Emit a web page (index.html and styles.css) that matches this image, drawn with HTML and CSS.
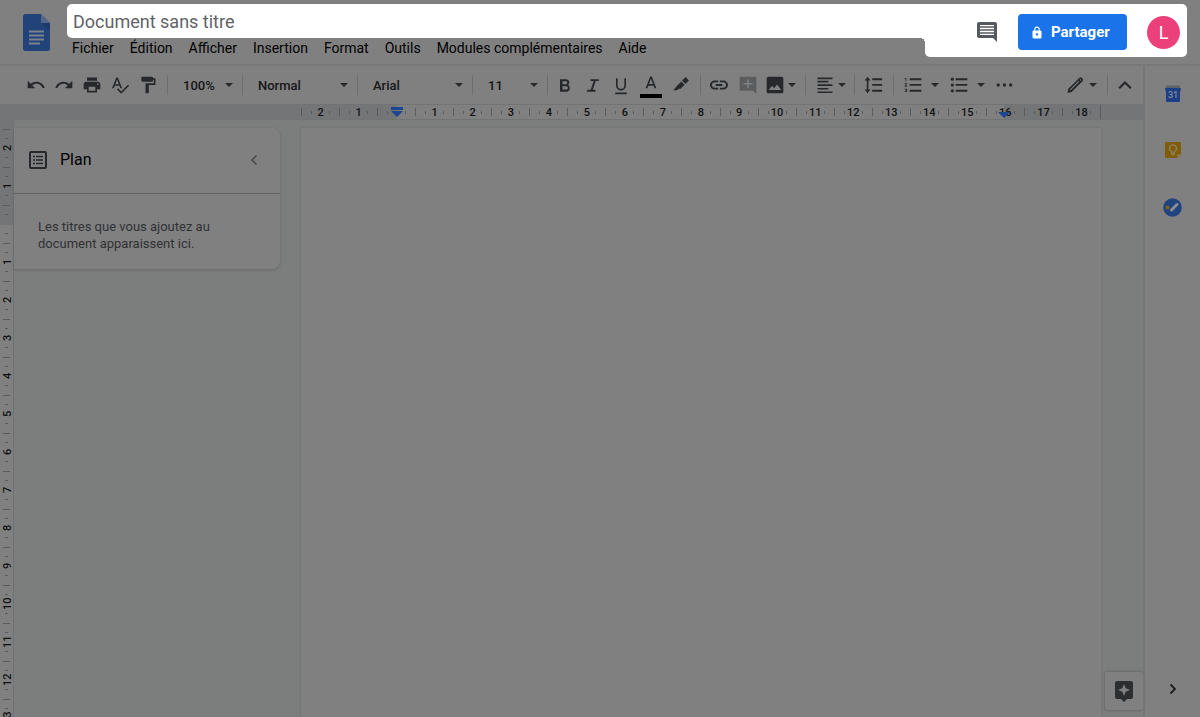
FILE: index.html
```html
<!DOCTYPE html>
<html lang="fr">
<head>
<meta charset="utf-8">
<title>Document sans titre</title>
<link rel="stylesheet" href="styles.css">
</head>
<body>
<header class="header">
  <a class="logo" href="#" aria-label="Accueil Docs">
    <svg width="27" height="37" viewBox="0 0 27 37"><path d="M2.500 0H18l9 9v25.500a2.500 2.500 0 0 1-2.500 2.500h-22A2.500 2.500 0 0 1 0 34.500v-32A2.500 2.500 0 0 1 2.500 0z" fill="#21437a"/><path d="M18 0l9 9h-9z" fill="#52668a"/><path d="M18 9h9v8z" fill="#1d3a6b"/><path d="M6 17.500h15M6 21.500h15M6 25.500h15M6 29.500h11" stroke="#7c828c" stroke-width="2"/></svg>
  </a>
  <div class="spotlight">
    <div class="heading">
      <input class="title" type="text" value="Document sans titre" aria-label="Titre du document">
      <nav class="menu">
        <button>Fichier</button><button>Édition</button><button>Afficher</button><button>Insertion</button><button>Format</button><button>Outils</button><button>Modules complémentaires</button><button>Aide</button>
      </nav>
    </div>
    <div class="actions">
      <button class="comments" aria-label="Commentaires"><svg width="24" height="24" viewBox="0 0 24 24"><path fill="#555a60" d="M22 4c0-1.100-.9-2-2-2H4c-1.100 0-2 .9-2 2v12c0 1.100.9 2 2 2h14l4 4zM19 15H5V5h14z"/><path d="M5 7h14M5 10h14M5 13h14" stroke="#555a60" stroke-width="1.500"/></svg></button>
      <button class="share"><svg width="12" height="13" viewBox="3 0 18 23"><path fill="#fff" d="M18 8h-1V6c0-2.760-2.240-5-5-5S7 3.240 7 6v2H6c-1.100 0-2 .9-2 2v10c0 1.100.9 2 2 2h12c1.100 0 2-.9 2-2V10c0-1.100-.9-2-2-2zm-6 9c-1.100 0-2-.9-2-2s.9-2 2-2 2 .9 2 2-.9 2-2 2zm3.100-9H8.900V6c0-1.710 1.390-3.100 3.100-3.100s3.100 1.390 3.100 3.100v2z"/></svg>Partager</button>
      <button class="avatar" aria-label="Compte">L</button>
    </div>
  </div>
</header>
<div class="shell">
  <main class="main">
    <div class="toolbar" role="toolbar">
      <button class="tool" aria-label="Annuler"><svg viewBox="0 0 24 24"><path d="M12.500 8c-2.650 0-5.050.99-6.900 2.600L2 7v9h9l-3.620-3.620c1.390-1.160 3.160-1.880 5.120-1.880 3.540 0 6.550 2.310 7.600 5.500l2.370-.78C21.080 11.030 17.150 8 12.500 8z"/></svg></button>
      <button class="tool" aria-label="Rétablir"><svg viewBox="0 0 24 24"><path d="M18.400 10.600C16.550 8.990 14.150 8 11.500 8c-4.650 0-8.580 3.030-9.960 7.220L3.900 16c1.050-3.190 4.050-5.500 7.600-5.500 1.950 0 3.730.72 5.120 1.880L13 16h9V7z"/></svg></button>
      <button class="tool" aria-label="Imprimer"><svg viewBox="0 0 24 24"><path d="M19 8H5c-1.660 0-3 1.340-3 3v6h4v4h12v-4h4v-6c0-1.660-1.340-3-3-3zm-3 11H8v-5h8v5zm3-7c-.55 0-1-.45-1-1s.45-1 1-1 1 .45 1 1-.45 1-1 1zm-1-9H6v4h12V3z"/></svg></button>
      <button class="tool" aria-label="Orthographe"><svg viewBox="0 0 24 24"><path d="M12.450 16h2.090L9.430 3H7.570L2.460 16h2.090l1.120-3h5.640l1.140 3zm-6.020-5L8.500 5.480 10.570 11H6.430zm15.160.59l-8.090 8.090L9.830 16l-1.410 1.410 5.090 5.090L23 13z"/></svg></button>
      <button class="tool" aria-label="Reproduire la mise en forme"><svg viewBox="0 0 24 24"><path d="M18 4V3c0-.55-.45-1-1-1H5c-.55 0-1 .45-1 1v4c0 .55.45 1 1 1h12c.55 0 1-.45 1-1V6h1v4H9v11c0 .55.45 1 1 1h2c.55 0 1-.45 1-1v-9h8V4z"/></svg></button>
      <span class="sep"></span>
      <label class="picker"><select aria-label="Zoom"><option>100%</option></select></label>
      <span class="sep"></span>
      <label class="picker wide"><select aria-label="Style"><option>Normal</option></select></label>
      <span class="sep"></span>
      <label class="picker wide"><select aria-label="Police"><option>Arial</option></select></label>
      <span class="sep"></span>
      <label class="picker"><select aria-label="Taille"><option>11</option></select></label>
      <span class="sep"></span>
      <button class="tool" aria-label="Gras"><svg viewBox="0 0 24 24"><path d="M15.600 11.790c.97-.67 1.650-1.770 1.650-2.790 0-2.260-1.750-4-4-4H6v15h8.040c2.090 0 3.710-1.700 3.710-3.790 0-1.980-.86-3.820-2.150-4.420zM9 7.500h4a1.500 1.500 0 0 1 0 3.500H9zm4.500 10H9v-4h4.500a2 2 0 0 1 0 4z"/></svg></button>
      <button class="tool" aria-label="Italique"><svg viewBox="0 0 24 24"><path d="M9 5v2.300h3.800L9.200 17.700H5V20h10v-2.300h-3.300l3.600-10.400H19V5z"/></svg></button>
      <button class="tool" aria-label="Souligné"><svg viewBox="0 0 24 24"><path d="M12 18.500c3.310 0 6-2.690 6-6V4h-2v8.500a4 4 0 0 1-8 0V4H6v8.500c0 3.310 2.690 6 6 6zM5 21v2h14v-2z"/></svg></button>
      <button class="tool color" aria-label="Couleur du texte"><svg viewBox="0 0 24 24"><path d="M11 3L5.500 17h2.250l1.120-3h6.250l1.120 3h2.250L13 3h-2zm-1.380 9L12 5.670 14.380 12H9.620z"/></svg></button>
      <button class="tool marker" aria-label="Surlignage"><svg viewBox="0 0 24 24"><path d="M17.500 2.500l4 4-4.200 4.200-4-4zM12.300 7.700l4 4-4.800 4.800H9.200L7.500 18.200H2.800l4.700-5.500z"/></svg></button>
      <span class="sep"></span>
      <button class="tool link" aria-label="Lien"><svg viewBox="0 0 24 24"><path d="M3.500 12c0-1.930 1.570-3.300 3.500-3.300h4V6.500H7c-3 0-5.800 2.500-5.800 5.500s2.800 5.500 5.800 5.500h4v-2.200H7c-1.930 0-3.500-1.370-3.500-3.300zM8 13.100h8v-2.200H8zM17 6.500h-4v2.200h4c1.930 0 3.500 1.370 3.500 3.300s-1.570 3.300-3.500 3.300h-4v2.200h4c3 0 5.800-2.500 5.800-5.500S20 6.500 17 6.500z"/></svg></button>
      <button class="tool faded" aria-label="Commentaire"><svg viewBox="0 0 24 24"><path d="M2 2h20v21l-4-4H2zM11 5v4.500H6.500v2H11V16h2v-4.500h4.500v-2H13V5z"/></svg></button>
      <button class="tool split" aria-label="Image"><svg viewBox="0 0 24 24"><path d="M22 20V4c0-1.100-.9-2-2-2H4c-1.100 0-2 .9-2 2v16c0 1.100.9 2 2 2h16c1.100 0 2-.9 2-2zM8.500 13l2.500 3 3.500-4.500L19.500 18h-15z"/></svg></button>
      <span class="sep"></span>
      <button class="tool split inset" aria-label="Alignement"><svg viewBox="0 0 24 24"><path d="M16 15.500H3v2h13zm0-8.500H3v2h13zM3 13.200h18v-2H3zm0 8.500h18v-2H3zM3 3v2h18V3z"/></svg></button>
      <span class="sep"></span>
      <button class="tool link" aria-label="Interligne"><svg viewBox="0 0 24 24"><path d="M6.500 6.500H9L5.500 2 2 6.500h2.500v11H2L5.500 22 9 17.500H6.500zM11 4v2.200h12V4zm0 16h12v-2.200H11zm0-7h12v-2.200H11z"/></svg></button>
      <span class="sep"></span>
      <button class="tool split roomy" aria-label="Liste numérotée"><svg viewBox="0 0 24 24"><path d="M2 17.500h2v.5H3v1h1v.5H2v1h3v-4H2zM3 7.500h1v-4H2v1h1zM2 11h1.800L2 13.100v.9h3v-1H3.200L5 10.900V10H2zm6-7v2.200h14V4zm0 16h14v-2.200H8zm0-7h14v-2.200H8z"/></svg></button>
      <button class="tool split roomy" aria-label="Liste à puces"><svg viewBox="0 0 24 24"><circle cx="4" cy="5" r="1.900"/><circle cx="4" cy="12" r="1.900"/><circle cx="4" cy="19" r="1.900"/><path d="M8 4v2.200h14V4zm0 16h14v-2.200H8zm0-7h14v-2.200H8z"/></svg></button>
      <button class="tool link" aria-label="Plus"><svg viewBox="0 0 24 24"><circle cx="5" cy="12" r="2"/><circle cx="12.500" cy="12" r="2"/><circle cx="20" cy="12" r="2"/></svg></button>
      <button class="tool split mode" aria-label="Mode édition"><svg viewBox="0 0 24 24"><path d="M3 21.500l1-5L17 3.500a2.300 2.300 0 0 1 3.300 0l.7.700a2.300 2.300 0 0 1 0 3.300L8 20.500zM6 17.500l.8.800L17 8l-.9-.9zM17.500 5.700l1.300 1.300.8-.8-1.300-1.300z" fill-rule="evenodd"/></svg></button>
      <span class="sep"></span>
      <button class="tool" aria-label="Masquer les menus"><svg viewBox="0 0 24 24"><path d="M5 16L12 9l7 7" fill="none" stroke="#26282b" stroke-width="2.600"/></svg></button>
    </div>
    <div class="ruler">
      <div class="scale">
        <span>2</span><span>1</span><span class="indent"><svg width="12" height="12" viewBox="0 0 12 12"><path d="M0 1h12v3H0zM0 5h12l-6 6z" fill="#1d4690"/></svg></span><span>1</span><span>2</span><span>3</span><span>4</span><span>5</span><span>6</span><span>7</span><span>8</span><span>9</span><span>10</span><span>11</span><span>12</span><span>13</span><span>14</span><span>15</span><span class="margin">16<svg width="12" height="7" viewBox="0 0 12 7"><path d="M0 0h12L6 6z" fill="#1d4690"/></svg></span><span>17</span><span>18</span>
      </div>
    </div>
    <div class="workspace">
      <div class="vruler">
        <span>2</span><span>1</span><span></span><span>1</span><span>2</span><span>3</span><span>4</span><span>5</span><span>6</span><span>7</span><span>8</span><span>9</span><span>10</span><span>11</span><span>12</span><span>13</span>
      </div>
      <aside class="outline">
        <div class="outline-head">
          <svg width="18" height="18" viewBox="0 0 18 18"><rect x="1" y="1" width="16" height="16" rx="1" fill="none" stroke="#26282b" stroke-width="2"/><path d="M4 5.500h2M4 9h2M4 12.500h2M7 5.500h7M7 9h7M7 12.500h7" stroke="#26282b" stroke-width="1.500"/></svg>
          <h2>Plan</h2>
          <button aria-label="Fermer le plan"><svg width="8" height="10" viewBox="0 0 8 10"><path d="M6.500 .5L2 5l4.500 4.500" fill="none" stroke="#46484a" stroke-width="1.500"/></svg></button>
        </div>
        <p>Les titres que vous ajoutez au document apparaissent ici.</p>
      </aside>
      <div class="page"></div>
      <div class="gutter">
        <button class="explore" aria-label="Explorer"><svg width="18" height="21" viewBox="0 0 18 21"><path d="M2 0h14a2 2 0 0 1 2 2v14a2 2 0 0 1-2 2h-4l-3 3-3-3H2a2 2 0 0 1-2-2V2a2 2 0 0 1 2-2z" fill="#2d2e30"/><path d="M9 3l1.700 4.300L15 9l-4.300 1.700L9 15l-1.700-4.300L3 9l4.300-1.700z" fill="#808080"/></svg></button>
      </div>
    </div>
  </main>
  <aside class="side">
    <a href="#" aria-label="Agenda"><svg width="16" height="17" viewBox="0 0 16 17"><path d="M1 1.500a1 1 0 0 1 1-1h12a1 1 0 0 1 1 1V4H1z" fill="#5f6266"/><path d="M0 4a1 1 0 0 1 1-1h14a1 1 0 0 1 1 1l-1 3v9a1 1 0 0 1-1 1H2a1 1 0 0 1-1-1V7z" fill="#1c3f86"/><text x="8" y="13" text-anchor="middle" class="day">31</text></svg></a>
    <a href="#" aria-label="Keep"><svg width="16" height="16" viewBox="0 0 16 16"><path d="M1 0h14a1 1 0 0 1 1 1v11l-4 4H1a1 1 0 0 1-1-1V1a1 1 0 0 1 1-1z" fill="#805c04"/><path d="M12 16v-4h4z" fill="#8a7444"/><path d="M6.500 11V9.500a3.500 3.500 0 1 1 3 0V11zM6.500 12.700h3" fill="none" stroke="#8d887a" stroke-width="1.200"/></svg></a>
    <a href="#" aria-label="Tasks"><svg width="19" height="19" viewBox="0 0 19 19"><circle cx="9.500" cy="9.500" r="9.300" fill="#21437f"/><circle cx="4.500" cy="9.500" r="2" fill="#80620a"/><path d="M8.500 12l5.500-5.500" stroke="#8b8d90" stroke-width="3" stroke-linecap="round"/></svg></a>
    <button aria-label="Masquer le panneau latéral"><svg width="8" height="12" viewBox="0 0 8 12"><path d="M1.500 1.500L6 6l-4.500 4.500" fill="none" stroke="#1c1d1f" stroke-width="1.800"/></svg></button>
  </aside>
</div>
</body>
</html>
```
FILE: styles.css
```css
* { box-sizing: border-box; }
body {
  margin: 0;
  height: 100vh;
  display: flex;
  flex-direction: column;
  overflow: hidden;
  background: #808080;
  color: #000;
  font-family: Roboto, sans-serif;
}
button { border: 0; padding: 0; background: none; color: inherit; font: inherit; }
svg { display: block; flex: none; }
h2, p { margin: 0; }

.header {
  display: flex;
  flex: none;
  height: 66px;
  padding: 4px 13px 8px 23px;
  border-bottom: 2px solid #767778;
}
.logo { width: 44px; padding-top: 10px; }
.spotlight { display: flex; flex: 1; height: 53px; }
.heading { display: flex; flex-direction: column; flex: 1; }
.title {
  flex: none;
  width: 100%;
  height: 34px;
  border: 0;
  border-radius: 5px 0 0 5px;
  padding: 0 6px;
  background: #fff;
  color: #5f6368;
  font: 18px Roboto, sans-serif;
}
.menu { position: relative; display: flex; gap: 16px; padding: 0 5px; font-size: 14px; line-height: 20px; white-space: nowrap; }
.menu::after {
  content: "";
  position: absolute;
  top: 0;
  right: 0;
  width: 5px;
  height: 5px;
  background: radial-gradient(circle at 0 100%, #808080 5px, #fff 5px);
}
.actions {
  display: flex;
  align-items: center;
  padding: 3px 7px 0 50px;
  border-radius: 0 5px 5px 5px;
  background: #fff;
}
.comments { margin-right: 19px; }
.share {
  display: flex;
  align-items: center;
  gap: 8px;
  width: 109px;
  height: 36px;
  margin-right: 20px;
  padding-left: 13px;
  border-radius: 4px;
  background: #1a73e8;
  color: #fff;
  font-size: 15px;
  font-weight: 700;
}
.avatar { width: 33px; height: 33px; border-radius: 50%; background: #ec407a; color: #fff; font-size: 18px; }

.shell { display: flex; flex: 1; min-height: 0; }
.main { display: flex; flex-direction: column; flex: 1; min-width: 0; }

.toolbar { display: flex; align-items: center; flex: none; height: 38px; padding: 0 4px 0 22px; }
.tool { display: flex; align-items: center; justify-content: center; flex: none; width: 28px; height: 28px; }
.tool svg { width: 20px; height: 20px; fill: #26282b; }
.tool.faded svg { fill: #5c5d5f; }
.sep { flex: none; width: 1px; height: 20px; margin: 0 3px 0 5px; background: #6d6e6f; }
.tool.color { flex-direction: column; width: 32px; padding-top: 2px; }
.color::after { content: ""; width: 22px; height: 4px; background: #000; }
.tool.link { width: 30px; }
.tool.split { justify-content: flex-start; gap: 3px; width: 38px; padding-left: 3px; }
.tool.inset { width: 40px; padding-left: 6px; }
.tool.roomy { gap: 8px; width: 46px; padding-left: 6px; }
.tool.mode { gap: 4px; width: 40px; margin-left: auto; }
.split::after, .picker::after {
  content: "";
  flex: none;
  border: 4px solid transparent;
  border-top-color: #26282b;
  border-bottom: 0;
}
.picker { display: flex; align-items: center; flex: none; width: 66px; padding: 0 4px 0 12px; }
.picker.wide { width: 106px; }
.picker select {
  flex: 1;
  min-width: 0;
  appearance: none;
  border: 0;
  padding: 0;
  background: none;
  color: #161718;
  font: 500 13px Roboto, sans-serif;
}

.ruler {
  flex: none;
  height: 16px;
  padding: 0 42px 0 301px;
  border-top: 1px solid #727374;
  border-bottom: 1px solid #727374;
  background: #747577;
}
.scale { display: flex; background: linear-gradient(to right, #747577 12%, #808080 12%, #808080 88%, #747577 88%); border-right: 1px solid #5a5b5c; }
.scale span {
  display: flex;
  justify-content: center;
  position: relative;
  flex: 1;
  height: 14px;
  border-left: 1px solid #5a5b5c;
  border-image: linear-gradient(transparent 25%, #5a5b5c 25%, #5a5b5c 75%, transparent 75%) 1;
  background:
    linear-gradient(#5a5b5c, #5a5b5c) 25% 50% / 1px 3px no-repeat,
    linear-gradient(#5a5b5c, #5a5b5c) 75% 50% / 1px 3px no-repeat;
  color: #111;
  font-size: 11px;
  font-weight: 500;
  line-height: 16px;
}
.indent svg { margin-top: 1px; }
.margin svg { position: absolute; left: 11px; bottom: 0; }

.workspace { display: flex; flex: 1; min-height: 0; background: #7c7d7d; }
.vruler {
  flex: none;
  width: 14px;
  padding-top: 9px;
  overflow: hidden;
  border-right: 1px solid #707172;
  background: linear-gradient(#747577 105px, #808080 105px);
}
.vruler span {
  display: flex;
  align-items: center;
  justify-content: center;
  width: 13px;
  height: 38px;
  padding-right: 2px;
  writing-mode: vertical-rl;
  transform: rotate(180deg);
  background:
    linear-gradient(#5a5b5c, #5a5b5c) 50% 100% / 7px 1px no-repeat,
    linear-gradient(#5a5b5c, #5a5b5c) 50% 25% / 3px 1px no-repeat,
    linear-gradient(#5a5b5c, #5a5b5c) 50% 75% / 3px 1px no-repeat;
  color: #111;
  font-size: 11px;
  font-weight: 500;
  line-height: 11px;
}
.outline {
  align-self: flex-start;
  flex: none;
  width: 266px;
  margin: 8px 21px 0 0;
  border-radius: 0 8px 8px 0;
  background: #808080;
  box-shadow: 0 1px 3px #66696a;
}
.outline-head { display: flex; align-items: center; height: 66px; padding: 0 22px 2px 15px; border-bottom: 1px solid #626364; }
.outline-head h2 { flex: 1; padding-left: 13px; font-size: 16px; font-weight: 400; }
.outline p { padding: 24px 40px 17px 24px; color: #303234; font-size: 13px; line-height: 17px; }
.page { flex: 1; margin-top: 8px; background: #808080; box-shadow: 0 0 2px #696a6b; }
.gutter { display: flex; align-items: flex-end; justify-content: flex-end; flex: none; width: 42px; padding-bottom: 7px; }
.explore {
  display: flex;
  align-items: center;
  justify-content: center;
  width: 38px;
  height: 38px;
  border-radius: 2px;
  background: #808080;
  box-shadow: 0 0 3px #555657;
}

.side {
  display: flex;
  flex-direction: column;
  align-items: center;
  flex: none;
  width: 57px;
  padding: 19px 0 22px;
  gap: 40px;
  border-left: 2px solid #747576;
}
.side button { margin-top: auto; }
.day { fill: #858b96; font-size: 9px; font-weight: 500; }
```
